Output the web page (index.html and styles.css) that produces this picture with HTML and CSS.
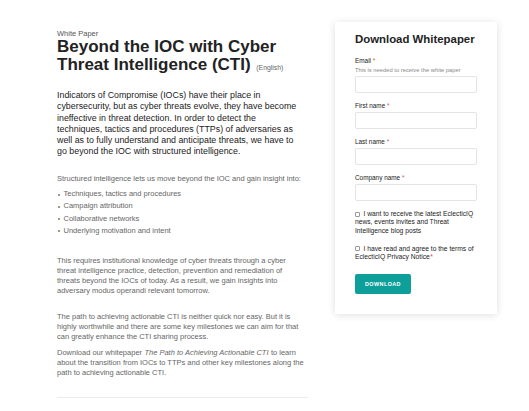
FILE: index.html
```html
<!DOCTYPE html>
<html lang="en">
<head>
<meta charset="utf-8">
<title>Beyond the IOC with Cyber Threat Intelligence (CTI)</title>
<link rel="stylesheet" href="styles.css">
</head>
<body>
<div class="page">
  <main class="content">
    <div class="eyebrow">White Paper</div>
    <h1 class="title">Beyond the IOC with Cyber Threat Intelligence (CTI) <span class="lang">(English)</span></h1>
    <p class="intro">Indicators of Compromise (IOCs) have their place in cybersecurity, but as cyber threats evolve, they have become ineffective in threat detection. In order to detect the techniques, tactics and procedures (TTPs) of adversaries as well as to fully understand and anticipate threats, we have to go beyond the IOC with structured intelligence.</p>
    <p class="text lead-in">Structured intelligence lets us move beyond the IOC and gain insight into:</p>
    <ul class="list">
      <li>Techniques, tactics and procedures</li>
      <li>Campaign attribution</li>
      <li>Collaborative networks</li>
      <li>Underlying motivation and intent</li>
    </ul>
    <p class="text p-requires">This requires institutional knowledge of cyber threats through a cyber threat intelligence practice, detection, prevention and remediation of threats beyond the IOCs of today. As a result, we gain insights into adversary modus operandi relevant tomorrow.</p>
    <p class="text p-path">The path to achieving actionable CTI is neither quick nor easy. But it is highly worthwhile and there are some key milestones we can aim for that can greatly enhance the CTI sharing process.</p>
    <p class="text p-download">Download our whitepaper <em class="doc-name">The Path to Achieving Actionable CTI</em> to learn about the transition from IOCs to TTPs and other key milestones along the path to achieving actionable CTI.</p>
    <hr class="rule">
  </main>
  <aside class="card">
    <h2 class="card-title">Download Whitepaper</h2>
    <form class="form">
      <div class="field">
        <label class="label">Email <span class="req">*</span></label>
        <div class="help">This is needed to receive the white paper</div>
        <input class="input" type="email">
      </div>
      <div class="field">
        <label class="label">First name <span class="req">*</span></label>
        <input class="input" type="text">
      </div>
      <div class="field">
        <label class="label">Last name <span class="req">*</span></label>
        <input class="input" type="text">
      </div>
      <div class="field">
        <label class="label">Company name <span class="req">*</span></label>
        <input class="input" type="text">
      </div>
      <label class="check"><span class="box"></span>I want to receive the latest EclecticIQ news, events invites and Threat Intelligence blog posts</label>
      <label class="check check-2"><span class="box"></span>I have read and agree to the terms of EclecticIQ Privacy Notice<span class="req req-tight">*</span></label>
      <button class="button" type="button">DOWNLOAD</button>
    </form>
  </aside>
</div>
</body>
</html>
```

FILE: styles.css
```css
* { box-sizing: border-box; }
html, body { margin: 0; padding: 0; background: #ffffff; }
body { font-family: "Liberation Sans", Arial, sans-serif; color: #222; }

.page {
  display: flex;
  align-items: flex-start;
  gap: 28px;
  padding: 22px 0 0 57px;
}

.content { width: 250px; padding-top: 8px; }

.eyebrow { font-size: 7.5px; line-height: 8px; color: #555; }

.title {
  margin: 0;
  font-size: 17px;
  line-height: 18px;
  font-weight: 700;
  color: #222;
}
.lang { font-size: 6.8px; font-weight: 400; color: #666; margin-left: 1px; }

.intro {
  margin: 13px 0 0;
  width: 244px;
  font-size: 8.85px;
  line-height: 11.3px;
  color: #222;
}

.text {
  margin: 0;
  width: 244px;
  font-size: 7.5px;
  line-height: 10px;
  color: #666;
}
.lead-in { margin-top: 16px; width: 250px; }
.list {
  list-style: none;
  margin: 4.3px 0 0;
  padding: 0;
  font-size: 7.5px;
  line-height: 12.3px;
  color: #666;
}
.list li { position: relative; padding-left: 6.5px; }
.list li::before {
  content: "";
  position: absolute;
  left: 0.5px;
  top: 5.5px;
  width: 2px;
  height: 2px;
  border-radius: 50%;
  background: #777;
}
.p-requires { margin-top: 18.5px; }
.p-path { margin-top: 16px; width: 242px; }
.p-download { margin-top: 6.5px; width: 250px; }
.doc-name { padding: 0 0.3px; }
.rule { margin: 19px 0 0; border: 0; border-top: 1px solid #ececec; width: 251px; }

.card {
  width: 162px;
  background: #fff;
  box-shadow: 0 1px 8px rgba(0, 0, 0, 0.13);
  padding: 10px 20px 20px;
}
.card-title {
  margin: 0;
  font-size: 11.4px;
  line-height: 14px;
  font-weight: 700;
  color: #222;
}
.form { margin-top: 11px; display: flex; flex-direction: column; }
.field { margin-bottom: 9px; }
.label {
  display: block;
  font-size: 6.4px;
  line-height: 8px;
  color: #222;
  margin-bottom: 2px;
}
.req { color: #e0504f; }
.req-tight { margin-left: 0.5px; }
.help { font-size: 5.8px; line-height: 7px; color: #888; margin-bottom: 2px; }
.input {
  display: block;
  width: 122px;
  height: 17px;
  margin: 0;
  border: 1px solid #e4e4e4;
  border-radius: 2px;
  background: #fff;
  padding: 0 4px;
}
.check {
  display: block;
  font-size: 6.7px;
  line-height: 8.3px;
  color: #222;
}
.check-2 { margin-top: 10px; }
.box {
  display: inline-block;
  width: 5px;
  height: 5px;
  border: 0.7px solid #999;
  border-radius: 1px;
  margin-right: 3.5px;
  vertical-align: -0.5px;
}
.button {
  align-self: flex-start;
  margin-top: 12.5px;
  width: 56px;
  height: 20px;
  border: 0;
  border-radius: 2px;
  background: #0f9f9a;
  color: #fff;
  font-family: "Liberation Sans", Arial, sans-serif;
  font-weight: 700;
  font-size: 5.4px;
  letter-spacing: 0.45px;
  padding: 0;
}
```
